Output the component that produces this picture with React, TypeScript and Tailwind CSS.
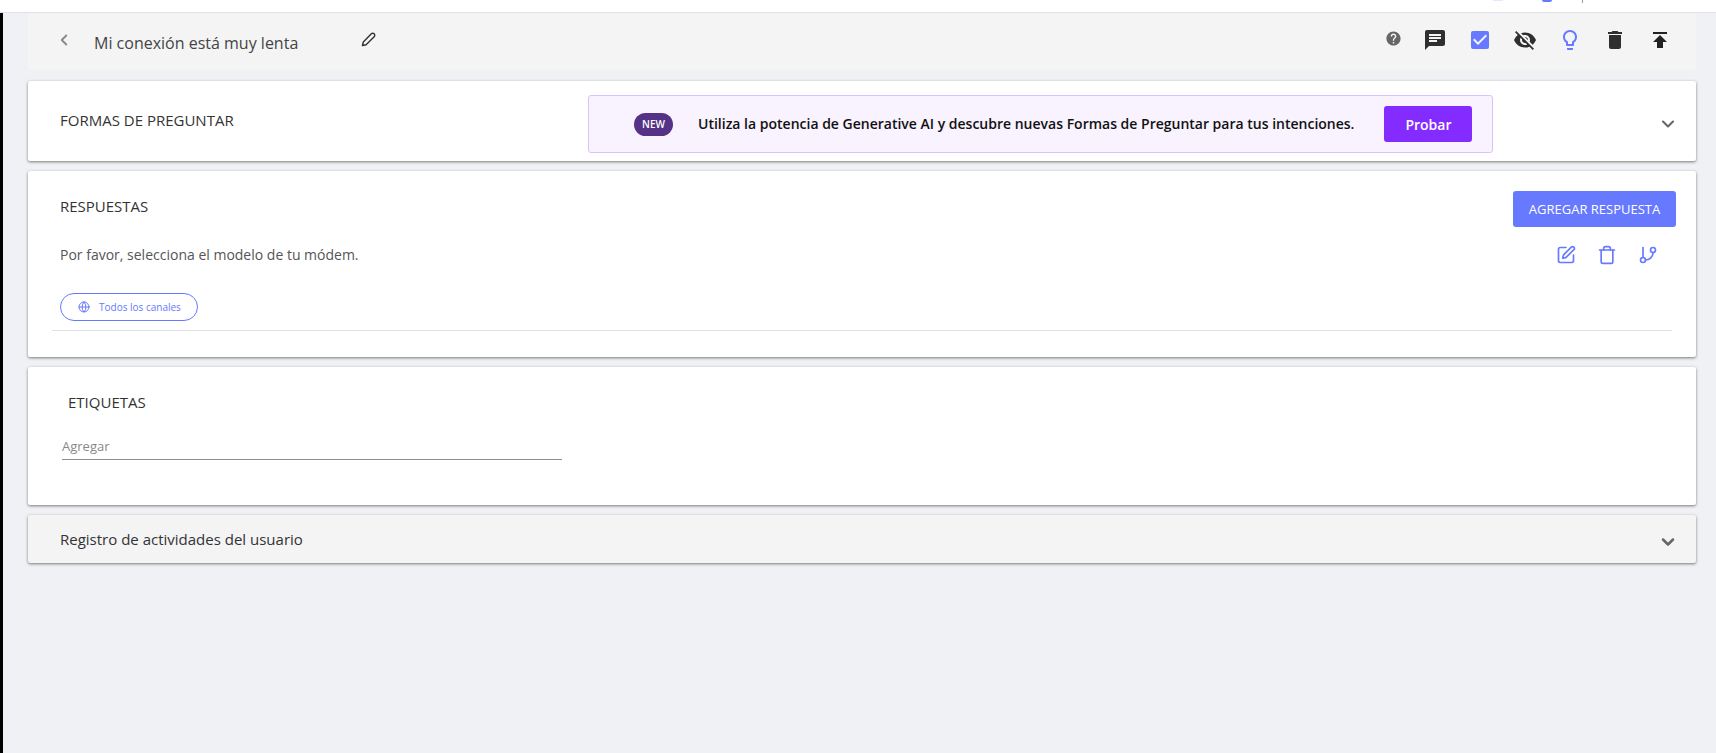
import { ChevronDown, ChevronLeft, GitBranch, Globe, SquarePen, Trash } from "lucide-react";
import {
  MdChat,
  MdCheckBox,
  MdDelete,
  MdHelp,
  MdLightbulbOutline,
  MdPublish,
  MdVisibilityOff,
} from "react-icons/md";

const sans = "font-['Open_Sans','Noto_Sans',sans-serif]";

export default function App() {
  return (
    <div className={`${sans} flex h-[753px] w-[1716px] flex-col overflow-hidden bg-[#f0f1f5]`}>
      {/* clipped bits of the app bar above */}
      <div className="flex h-[13px] shrink-0 items-start border-b border-[#e0e1e8] bg-white pl-[1493px]">
        <div className="h-[1px] w-[10px] bg-[#e4e7ff]" />
        <div className="ml-[39px] h-[2px] w-[10px] rounded-b bg-[#6679ff]" />
        <div className="ml-[30px] h-[3px] w-[1px] bg-[#999]" />
      </div>
      <div className="flex flex-1">
        <div className="w-[3px] shrink-0 bg-black" />
        <main className="flex flex-1 flex-col pl-[25px] pr-5">
          <header className="flex h-[57px] items-center bg-[#f4f4f5] pl-[27px] pr-[24px]">
            <ChevronLeft className="-mt-[4px] h-[18px] w-[18px] text-[#888]" strokeWidth={2.5} />
            <h1 className="ml-[21px] mt-[3px] text-[16px] text-[#444]">Mi conexión está muy lenta</h1>
            <svg
              viewBox="0 0 24 24"
              className="-mt-[4px] ml-[62px] h-[17px] w-[17px] text-[#333]"
              fill="none"
              stroke="currentColor"
              strokeWidth="2"
              strokeLinejoin="round"
            >
              <path d="M3.5 20.5l1.2-5L16 4a2.6 2.6 0 0 1 4 4L8.6 19.4z" />
            </svg>
            <div className="-mt-[4px] ml-auto flex items-center gap-[21px]">
              <MdHelp className="-mt-[3px] text-[17px] text-[#666]" />
              <MdChat className="text-[24px] text-[#2f2f2f]" />
              <MdCheckBox className="text-[24px] text-[#6679ff]" />
              <MdVisibilityOff className="text-[24px] text-[#2f2f2f]" />
              <MdLightbulbOutline className="text-[24px] text-[#6679ff]" />
              <MdDelete className="text-[24px] text-[#2f2f2f]" />
              <MdPublish className="text-[24px] text-[#222]" />
            </div>
          </header>

          <section className="mt-[11px] flex h-[80px] items-center rounded-[2px] bg-white pl-[32px] pr-[18px] shadow-[0_1px_3px_rgba(0,0,0,0.5)]">
            <h2 className="-mt-[2px] w-[528px] text-[15px] text-[#333]">FORMAS DE PREGUNTAR</h2>
            <div className="mt-[6px] flex h-[58px] w-[905px] items-center rounded-[3px] border border-[#d9c2ff] bg-[#f8f3fe] pl-[45px]">
              <span className="flex h-[23px] w-[39px] items-center justify-center rounded-full bg-[#553285] text-[10px] font-semibold text-white">
                NEW
              </span>
              <span className="-mt-[1px] ml-[25px] text-[14px] font-semibold text-[#111]">
                Utiliza la potencia de Generative AI y descubre nuevas Formas de Preguntar para tus intenciones.
              </span>
              <button className="ml-[30px] h-[36px] w-[88px] rounded-[3px] bg-[#842cff] text-[14px] font-semibold text-white">
                Probar
              </button>
            </div>
            <ChevronDown className="ml-auto mt-[6px] h-[20px] w-[20px] text-[#666]" strokeWidth={2.5} />
          </section>

          <section className="mt-[10px] h-[186px] rounded-[2px] bg-white pt-[20px] shadow-[0_1px_3px_rgba(0,0,0,0.5)]">
            <div className="flex items-start justify-between pl-[32px] pr-5">
              <h2 className="mt-[4px] text-[15px] text-[#333]">RESPUESTAS</h2>
              <button className="h-[36px] w-[163px] rounded-[3px] bg-[#6679ff] pt-[1px] text-[13px] text-white">
                AGREGAR RESPUESTA
              </button>
            </div>
            <div className="mt-[17px] flex items-center justify-between pl-[32px] pr-[38px]">
              <p className="text-[14px] text-[#555]">Por favor, selecciona el modelo de tu módem.</p>
              <div className="flex items-center gap-[21px] text-[#6679ff]">
                <SquarePen className="h-[20px] w-[20px]" strokeWidth={2} />
                <Trash className="h-[20px] w-[20px]" strokeWidth={2} />
                <GitBranch className="h-[20px] w-[20px]" strokeWidth={2} />
              </div>
            </div>
            <div className="ml-[32px] mt-[28px] flex h-[28px] w-[138px] items-center rounded-full border border-[#6679ff] pl-[17px] text-[#6679ff]">
              <Globe className="h-[12px] w-[12px]" />
              <span className="ml-[9px] text-[10px]">Todos los canales</span>
            </div>
            <div className="ml-[24px] mr-[24px] mt-[9px] border-b border-[#dfe0e8]" />
          </section>

          <section className="mt-[10px] h-[138px] rounded-[2px] bg-white pl-[34px] pt-[24px] shadow-[0_1px_3px_rgba(0,0,0,0.5)]">
            <h2 className="ml-[6px] text-[15px] text-[#333]">ETIQUETAS</h2>
            <div className="mt-[23px] w-[500px] border-b border-[#8c8c8c] pb-[3px] text-[13px] text-[#888]">Agregar</div>
          </section>

          <section className="mt-[10px] flex h-[48px] items-center rounded-[2px] bg-[#f4f4f5] pl-[32px] pr-[18px] shadow-[0_1px_3px_rgba(0,0,0,0.5)]">
            <h2 className="text-[15px] text-[#333]">Registro de actividades del usuario</h2>
            <ChevronDown className="ml-auto mt-[6px] h-[20px] w-[20px] text-[#666]" strokeWidth={3} />
          </section>
        </main>
      </div>
    </div>
  );
}
